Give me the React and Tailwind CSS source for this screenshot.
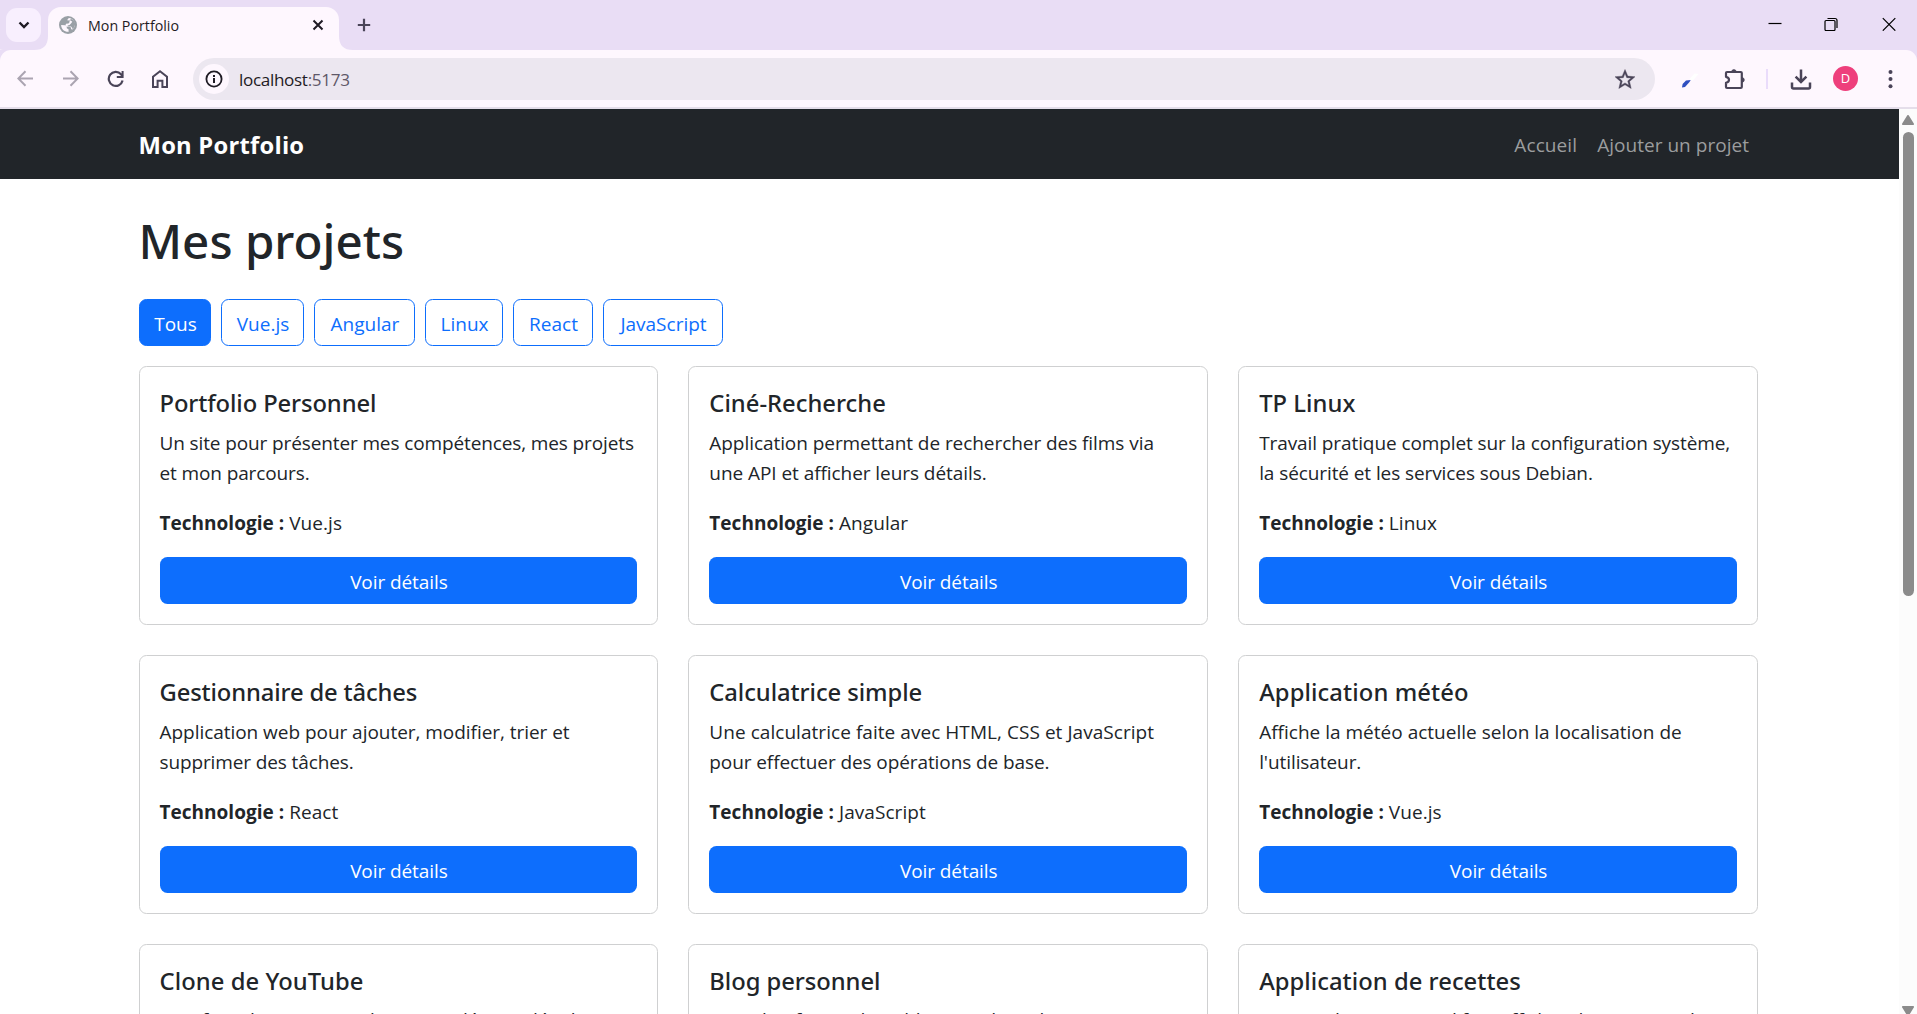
import React from 'react';

const sans = 'font-["Open_Sans","Noto_Sans",sans-serif]';
const heading = 'font-["Noto_Sans","Open_Sans",sans-serif]';

const filters = [
  { label: 'Tous', width: 'w-[72px]', active: true },
  { label: 'Vue.js', width: 'w-[83px]' },
  { label: 'Angular', width: 'w-[101px]' },
  { label: 'Linux', width: 'w-[78px]' },
  { label: 'React', width: 'w-[80px]' },
  { label: 'JavaScript', width: 'w-[120px]' },
];

const projects = [
  { title: 'Portfolio Personnel', lines: ['Un site pour présenter mes compétences, mes projets', 'et mon parcours.'], tech: 'Vue.js', track: 'tracking-[-0.12px]', head: 'tracking-[-0.1px]' },
  { title: 'Ciné-Recherche', lines: ['Application permettant de rechercher des films via', 'une API et afficher leurs détails.'], tech: 'Angular', track: 'tracking-[-0.06px]', head: 'tracking-[0.02px]' },
  { title: 'TP Linux', lines: ['Travail pratique complet sur la configuration système,', 'la sécurité et les services sous Debian.'], tech: 'Linux', track: 'tracking-[-0.09px]', head: 'tracking-[0.05px]' },
  { title: 'Gestionnaire de tâches', lines: ['Application web pour ajouter, modifier, trier et', 'supprimer des tâches.'], tech: 'React', track: 'tracking-[-0.04px]', second: 'tracking-[-0.12px]', head: 'tracking-[-0.13px]' },
  { title: 'Calculatrice simple', lines: ['Une calculatrice faite avec HTML, CSS et JavaScript', 'pour effectuer des opérations de base.'], tech: 'JavaScript', track: 'tracking-[0.05px]', second: 'tracking-[-0.09px]', head: 'tracking-[-0.06px]' },
  { title: 'Application météo', lines: ['Affiche la météo actuelle selon la localisation de', "l'utilisateur."], tech: 'Vue.js', track: 'tracking-[0.01px]', second: 'tracking-[-0.08px]', head: 'tracking-[0.12px]' },
  { title: 'Clone de YouTube', lines: ['Interface de type YouTube avec vidéos et détails', 'de lecture.'], tech: 'React', track: 'tracking-[0px]', head: 'tracking-[0.08px]', gap: 'mt-[9px]' },
  { title: 'Blog personnel', lines: ["Une plateforme de publication d'articles", 'personnels.'], tech: 'Angular', track: 'tracking-[0px]', head: 'tracking-[-0.04px]', gap: 'mt-[9px]' },
  { title: 'Application de recettes', lines: ["Permet d'ajouter, modifier, afficher des recettes de", 'cuisine.'], tech: 'Vue.js', track: 'tracking-[-0.1px]', head: 'tracking-[0.05px]', gap: 'mt-[9px]' },
];

function Icon({ w, h, className = '', children }) {
  return (
    <svg width={w} height={h} viewBox={`0 0 ${w} ${h}`} fill="none" stroke="currentColor" strokeWidth="2" className={`shrink-0 ${className}`}>
      {children}
    </svg>
  );
}

function TabStrip() {
  return (
    <div className="flex h-[50px] bg-[#e9ddf5] text-[#1f1b24]">
      <div className="flex h-[50px] w-12 flex-col">
        <button className="ml-1.5 mt-2 flex h-[34px] w-[35px] shrink-0 items-center justify-center rounded-[11px] bg-[#f8effe]">
          <Icon w={12} h={8}><path d="M1.5 1.5 6 6l4.5-4.5" strokeWidth="2.4" /></Icon>
        </button>
        <svg width="48" height="14" viewBox="0 0 48 14" className="-mt-1.5 shrink-0" fill="#fef7fe">
          <path d="M0 14V13.500Q2 14 8 14ZM34 14Q48 14 48 0V14Z" />
        </svg>
      </div>
      <div className="mt-[7px] flex w-[291px] items-center rounded-t-[13px] bg-[#fef7fe] pb-[7px] pl-[11px] pr-[15px]">
        <svg width="18" height="18" viewBox="0 0 18 18" className="shrink-0">
          <circle cx="9" cy="9" r="9" fill="#9aa0a6" />
          <path d="M10 2.100c3.600.6 6 3.500 6 6.900-.4 1.700-1.300 3.300-2.400 4.400l-1.400-.2-.3-1.600-1.700-1-3 .1-.8-1.400.7-1.600 2.400-.3 1.200-1.300-.4-1.500-2.200-.4 1.200-1.600ZM2.100 9l4 .3 1.600 1.600.2 1.500 1.500.5.300 2.900C5.700 16.200 2.300 13.200 2.100 9Z" fill="#fef7fe" fillRule="evenodd" />
          <path d="M9.600 4.400h2l1.700 1.300-1.300 1.800-1.500 1.600-2 .3.600.8 2.900.3 1.300 1.600.3 1.300 2-2.800.8-3-1.500-2.800-2.600-1.900Z" fill="#9aa0a6" />
        </svg>
        <span className="ml-[11px] whitespace-nowrap pt-px text-[14.25px] leading-5">Mon Portfolio</span>
        <Icon w={12} h={12} className="ml-auto"><path d="m1.500 1.500 9 9m0-9-9 9" /></Icon>
      </div>
      <svg width="14" height="50" viewBox="0 0 14 50" className="shrink-0"><path d="M0 36Q0 50 14 50H0Z" fill="#fef7fe" /></svg>
      <Icon w={14} h={14} className="ml-1 mt-[18px] text-[#4a4458]"><path d="M7 .8v12.400M.8 7h12.400" strokeWidth="2.200" /></Icon>
      <div className="ml-auto mr-[21px] mt-[17px] flex gap-[43px] text-black">
        <Icon w={14} h={14}><path d="M.5 6.500h13" strokeWidth="1.200" /></Icon>
        <Icon w={14} h={14} className="-ml-px mr-px">
          <rect x="1" y="3.500" width="10" height="10" rx="1" strokeWidth="1.200" />
          <path d="M3.500 1.500H11a2 2 0 0 1 2 2V11" strokeWidth="1.200" />
        </Icon>
        <Icon w={14} h={14}><path d="m.8 1.200 12.500 12.500m0-12.500L.8 13.700" strokeWidth="1.200" /></Icon>
      </div>
    </div>
  );
}

function Toolbar() {
  return (
    <div className="h-[59px] bg-[#e9ddf5]">
      <div className="flex h-[59px] items-center rounded-t-[11px] border-b-2 border-[#e5deea] bg-[#fef7fe] pl-[17px] text-[#4a4458]">
        <Icon w={17} h={17} className="text-[#aba4b1]"><path d="M16 8.500h-15M8.500 1.200 1.300 8.500l7.200 7.300" /></Icon>
        <Icon w={17} h={17} className="ml-7 text-[#aba4b1]"><path d="M1 8.500h15M8.500 1.200l7.200 7.300-7.200 7.300" /></Icon>
        <Icon w={18} h={18} className="ml-7">
          <path d="M15.600 10.500A7 7 0 1 1 14 4.200L15.500 6" strokeWidth="2.200" />
          <path d="M15.600 1v6H9.800" strokeWidth="2" />
        </Icon>
        <Icon w={18} h={20} className="ml-[26px]">
          <path d="M2 18V7.800L9 2.200l7 5.600V18h-4.600v-6.200H6.600V18Z" />
        </Icon>
        <div className="ml-[24px] flex h-[42px] w-[1462px] items-center rounded-full bg-[#ece7f0] pl-1.5 pr-[20px]">
          <div className="flex h-[30px] w-[30px] items-center justify-center rounded-full bg-[#fef7fe] text-[#1f1b24]">
            <Icon w={18} h={18}>
              <circle cx="9" cy="9" r="7.600" strokeWidth="1.800" />
              <path d="M9 8v5M9 5v1.900" />
            </Icon>
          </div>
          <span className="ml-[10px] whitespace-nowrap pt-0.5 text-[17.1px] leading-6 tracking-[-0.33px] text-[#1f1b24]">
            localhost<span className="text-[#5f5868]">:5173</span>
          </span>
          <svg width="20" height="20" viewBox="2 1.500 20 20" className="ml-auto" fill="#4a4458">
            <path d="m22 9.240-7.190-.62L12 2 9.190 8.630 2 9.240l5.460 4.730L5.820 21 12 17.270 18.180 21l-1.630-7.030L22 9.240zM12 15.400l-3.760 2.270 1-4.280-3.320-2.880 4.380-.38L12 6.100l1.710 4.040 4.380.38-3.320 2.880 1 4.280L12 15.400z" stroke="#4a4458" strokeWidth=".4" />
          </svg>
        </div>
        <svg width="18" height="20" viewBox="0 0 18 20" className="ml-[26px] shrink-0">
          <path d="m8.500 10 5-5.500 4 .5-6 7Z" fill="#fff" />
          <path d="M1 18.500 1.600 15 5 11.500 9.700 11 8.500 13 4 18Z" fill="#2f4fc0" />
        </svg>
        <Icon w={22} h={22} className="ml-[25px]">
          <path d="M3 4h13.800a1 1 0 0 1 1 1V19a1 1 0 0 1-1 1H3a1 1 0 0 1-1-1v-4.200q3-.6 3-3t-3-3V5a1 1 0 0 1 1-1Z" strokeLinejoin="round" strokeWidth="2.200" />
          <path d="M7.600 4a2.300 2.300 0 0 1 4.600 0ZM18 9.700a2.200 2.200 0 0 1 0 4.400Z" fill="currentColor" strokeWidth="1" />
        </Icon>
        <div className="ml-[20px] h-5 w-0.5 bg-[#eadcfb]" />
        <Icon w={22} h={22} className="ml-[22px]">
          <path d="M11 1.500v12M5.600 8.700 11 14l5.400-5.300M2 14.500V19a1.500 1.500 0 0 0 1.500 1.500h15A1.500 1.500 0 0 0 20 19v-4.500" strokeWidth="2.500" />
        </Icon>
        <div className="ml-[21px] flex h-[25px] w-[25px] items-center justify-center rounded-full bg-[#ee3f7c] text-[13px] leading-none text-white">D</div>
        <svg width="5" height="20" viewBox="0 0 5 20" className="ml-[30px]" fill="#4a4458">
          <circle cx="2.500" cy="3" r="2" /><circle cx="2.500" cy="10" r="2" /><circle cx="2.500" cy="17.200" r="2" />
        </svg>
      </div>
    </div>
  );
}

function Card({ title, lines, tech, track, second, head, gap }) {
  return (
    <div className="h-[259px] rounded-[7.500px] border border-[#cfd0d1] bg-white px-5 pt-[21px]">
      <h5 className={`${heading} ${head} whitespace-nowrap text-[23.75px] font-medium leading-[30px]`}>{title}</h5>
      <p className={`${gap || 'mt-2.5'} whitespace-nowrap text-[19px] leading-[30px] ${track}`}>
        {lines[0]}<br /><span className={second || ''}>{lines[1]}</span>
      </p>
      <p className="mt-5 text-[19px] leading-[30px] tracking-[0.06px]"><strong className="font-bold tracking-[0.02px]">Technologie :</strong> {tech}</p>
      <button className="mt-[19px] flex h-[47px] w-full items-center justify-center rounded-[7.500px] bg-[#0d6efd] pl-px pt-0.5 text-[19px] leading-[30px] tracking-[-0.08px] text-white">Voir détails</button>
    </div>
  );
}

export default function App() {
  return (
    <div className={`${sans} flex h-[1014px] w-[1917px] flex-col overflow-hidden bg-white text-[#212529]`}>
      <TabStrip />
      <Toolbar />
      <div className="flex min-h-0 flex-1">
        <div className="w-[1899px] overflow-hidden">
          <nav className="flex h-[70px] items-center justify-between bg-[#212529] pl-[138.5px] pr-[150px] pt-0.5">
            <span className="text-[23.75px] font-bold leading-[38px] tracking-[0.24px] text-white">Mon Portfolio</span>
            <div className="flex gap-5 text-[19px] leading-[30px] text-[#9b9d9e]">
              <span className="tracking-[0.1px]">Accueil</span>
              <span className="tracking-[0.03px]">Ajouter un projet</span>
            </div>
          </nav>
          <main className="pl-[138.5px] pr-[141px] pt-8">
            <h1 className={`${heading} text-[47.500px] font-medium leading-[60px] tracking-[0.02px]`}>Mes projets</h1>
            <div className="mt-7 flex gap-2.5">
              {filters.map((f) => (
                <button key={f.label} className={`${f.width} flex h-[47px] items-center justify-center rounded-[7.500px] border border-[#0d6efd] pl-0.5 pt-0.5 text-[19px] leading-[30px] ${f.active ? 'bg-[#0d6efd] text-white' : 'text-[#0d6efd]'}`}>
                  {f.label}
                </button>
              ))}
            </div>
            <div className="mt-5 grid grid-cols-3 gap-[30px]">
              {projects.map((p) => <Card key={p.title} {...p} />)}
            </div>
          </main>
        </div>
        <div className="flex w-[18px] flex-col items-center bg-[#fcfcfc]">
          <svg width="12" height="10" viewBox="0 0 12 10" className="mt-1.5 shrink-0" fill="#8b8b8b"><path d="M5 .7a1.200 1.200 0 0 1 2 0l4.800 7.800a.9.900 0 0 1-.8 1.500H1a.9.900 0 0 1-.8-1.500Z" /></svg>
          <div className="mt-[7px] h-[464px] w-[11px] rounded-full bg-[#8b8b8b]" />
          <svg width="12" height="10" viewBox="0 0 12 10" className="-mb-0.5 mt-auto shrink-0" fill="#8b8b8b"><path d="M5 9.300a1.200 1.200 0 0 0 2 0l4.800-7.800A.9.900 0 0 0 11 0H1a.9.900 0 0 0-.8 1.500Z" /></svg>
        </div>
      </div>
    </div>
  );
}
